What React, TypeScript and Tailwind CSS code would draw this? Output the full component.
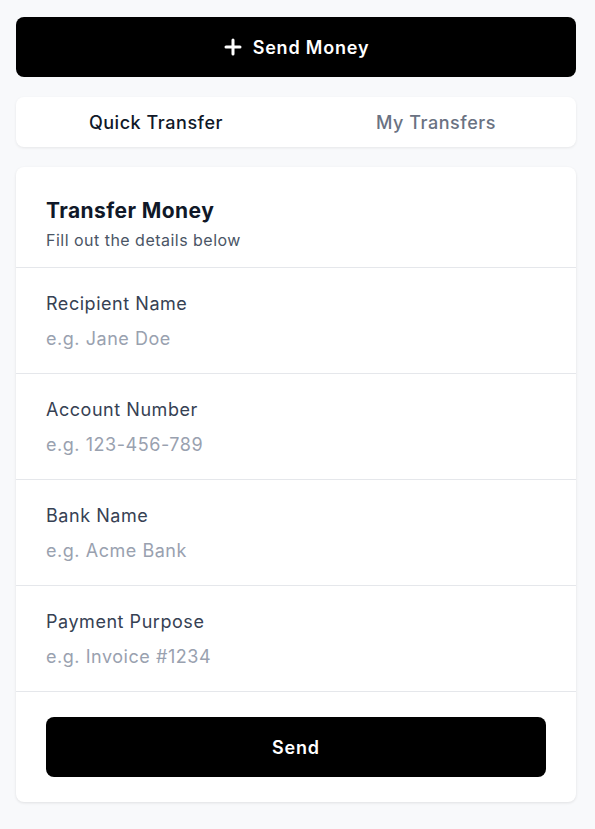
import React from "react";

function PlusIcon() {
  return (
    <svg width="20" height="20" viewBox="0 0 20 20" fill="none" aria-hidden="true">
      <path d="M10 3v14M3 10h14" stroke="white" strokeWidth="3" strokeLinecap="round" />
    </svg>
  );
}

const fields = [
  { label: "Recipient Name", placeholder: "e.g. Jane Doe" },
  { label: "Account Number", placeholder: "e.g. 123-456-789" },
  { label: "Bank Name", placeholder: "e.g. Acme Bank" },
  { label: "Payment Purpose", placeholder: "e.g. Invoice #1234" },
];

export default function App() {
  return (
    <div
      className="min-h-[829px] bg-[#f8f9fb] pl-4 pr-[19px] pt-[17px] pb-6"
      style={{ fontFamily: "Inter, 'Noto Sans', sans-serif" }}
    >
      <div className="flex flex-col gap-5">
        <button className="flex h-[60px] w-full items-center justify-center gap-[10px] rounded-lg bg-black text-[18px] font-semibold tracking-[0.045em] text-white">
          <PlusIcon />
          <span>Send Money</span>
        </button>

        <div className="grid h-[50px] grid-cols-2 rounded-lg bg-white shadow-[0_1px_3px_rgba(0,0,0,0.08)]">
          <div className="flex items-center justify-center text-[18px] font-medium tracking-[0.03em] text-gray-900">
            Quick Transfer
          </div>
          <div className="flex items-center justify-center text-[18px] font-medium tracking-[0.03em] text-gray-500">
            My Transfers
          </div>
        </div>

        <div className="overflow-hidden rounded-lg bg-white shadow-[0_1px_3px_rgba(0,0,0,0.1)]">
          <div className="flex h-[101px] flex-col border-b border-gray-200 px-[30px] pt-[30px]">
            <h2 className="text-[21px] font-bold leading-7 tracking-[0.02em] text-gray-900">Transfer Money</h2>
            <p className="mt-[3px] text-[16px] leading-6 tracking-[0.03em] text-gray-600">Fill out the details below</p>
          </div>

          {fields.map((f) => (
            <div key={f.label} className="flex h-[106px] flex-col justify-center gap-[7px] border-b border-gray-200 px-[30px] pt-[2px]">
              <label className="text-[18px] leading-7 tracking-[0.03em] text-gray-700">{f.label}</label>
              <input
                className="w-full bg-transparent text-[18px] leading-7 tracking-[0.03em] text-gray-900 outline-none placeholder:text-gray-400"
                placeholder={f.placeholder}
              />
            </div>
          ))}

          <div className="px-[30px] pb-[25px] pt-[25px]">
            <button className="flex h-[60px] w-full items-center justify-center rounded-lg bg-black text-[18px] font-semibold tracking-[0.045em] text-white">
              Send
            </button>
          </div>
        </div>
      </div>
    </div>
  );
}
